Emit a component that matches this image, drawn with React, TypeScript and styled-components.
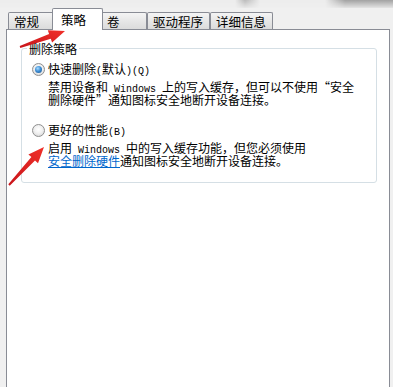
import styled, { createGlobalStyle } from "styled-components";

const GlobalStyle = createGlobalStyle`
  html, body {
    margin: 0;
    padding: 0;
    background: #f0f0f0;
  }
  body {
    font-family: "Noto Sans CJK SC", "Noto Sans", sans-serif;
    font-size: 12px;
    color: #000;
  }
`;

const Window = styled.div`
  position: relative;
  width: 393px;
  height: 387px;
  overflow: hidden;
  background: #f0f0f0;
  display: flex;
  flex-direction: column;
`;

const TopEdge = styled.div`
  height: 8px;
  flex: none;
  background:
    linear-gradient(to right, transparent 0, transparent 235px, rgba(90, 90, 90, 0.35) 245px, transparent 260px, transparent 325px, rgba(70, 70, 70, 0.45) 345px, rgba(70, 70, 70, 0.45) 393px),
    #ececec;
  -webkit-mask-image: linear-gradient(to bottom, #000, rgba(0, 0, 0, 0.15));
`;

const TabStrip = styled.div`
  display: flex;
  align-items: flex-end;
  height: 22px;
  padding-left: 8px;
  flex: none;
`;

const Tab = styled.div<{ $active?: boolean }>`
  position: relative;
  z-index: ${p => (p.$active ? 3 : 0)};
  box-sizing: border-box;
  min-width: ${p => (p.$active ? 51 : 46)}px;
  height: ${p => (p.$active ? 22 : 18)}px;
  margin: 0 ${p => (p.$active ? -2 : 0)}px;
  padding: ${p => (p.$active ? "3px 8px 0 8px" : "1px 6px 0 5px")};
  border: 1px solid #898c95;
  border-bottom: none;
  border-radius: 2px 2px 0 0;
  background: ${p => (p.$active ? "#ffffff" : "linear-gradient(to bottom, #f4f4f4 0%, #e6e6e6 50%, #dadada 100%)")};
  font-size: 12.5px;
  line-height: 15px;
  white-space: nowrap;
  & + & {
    border-left: ${p => (p.$active ? "1px solid #898c95" : "none")};
  }
`;

const Panel = styled.div`
  position: relative;
  z-index: 1;
  flex: 1;
  margin: -1px 3px 0 6px;
  border: 1px solid #898c95;
  border-bottom: none;
  background: #ffffff;
  padding: 12px 12px 0 14px;
`;

const Group = styled.fieldset`
  margin: 0;
  padding: 0;
  border: 1px solid #d5dfe5;
  border-radius: 3px;
  min-width: 0;
`;

const GroupTitle = styled.legend`
  margin-left: 5px;
  padding: 0 2px;
  line-height: 13px;
  font-size: 12px;
`;

const GroupBody = styled.div`
  padding: 8px 10px 15px 10px;
`;

const OptionRow = styled.div<{ $gap?: number }>`
  display: flex;
  align-items: center;
  gap: 3px;
  height: 13px;
  margin-top: ${p => p.$gap ?? 0}px;
  line-height: 13px;
  white-space: nowrap;
`;

const Radio = styled.span<{ $checked?: boolean }>`
  position: relative;
  flex: none;
  box-sizing: border-box;
  width: 13px;
  height: 13px;
  border-radius: 50%;
  border: 1px solid #8f8f8f;
  background: radial-gradient(circle at 50% 40%, #ffffff 0%, #f1f1f1 45%, #cfcfcf 100%);
  &::after {
    content: "";
    display: ${p => (p.$checked ? "block" : "none")};
    position: absolute;
    left: 2px;
    top: 2px;
    width: 7px;
    height: 7px;
    border-radius: 50%;
    background: radial-gradient(circle at 40% 35%, #a9dcff 0%, #3f8fd6 45%, #174f86 100%);
  }
`;

const Desc = styled.div<{ $gap?: number }>`
  margin-top: ${p => p.$gap ?? 0}px;
  padding-left: 16px;
`;

const Line = styled.div`
  display: flex;
  align-items: baseline;
  height: 13px;
  line-height: 13px;
  white-space: nowrap;
`;

const Half = styled.span`
  font-family: "Liberation Mono", "DejaVu Sans Mono", monospace;
  font-size: 10px;
  white-space: pre;
`;

const HelpLink = styled.a`
  color: #0066cc;
  text-decoration: underline;
  cursor: pointer;
`;

const Marks = styled.svg`
  position: absolute;
  left: 0;
  top: 0;
  z-index: 5;
  pointer-events: none;
`;

const tabs = ["常规", "策略", "卷", "驱动程序", "详细信息"];

export default function App() {
  return (
    <>
      <GlobalStyle />
      <Window>
        <TopEdge />
        <TabStrip>
          {tabs.map(t => (
            <Tab key={t} $active={t === "策略"}>{t}</Tab>
          ))}
        </TabStrip>
        <Panel>
          <Group>
            <GroupTitle>删除策略</GroupTitle>
            <GroupBody>
              <OptionRow>
                <Radio $checked />
                <span>快速删除<Half>(</Half>默认<Half>)(Q)</Half></span>
              </OptionRow>
              <Desc $gap={4}>
                <Line>禁用设备和<Half> Windows </Half>上的写入缓存，但可以不使用“安全</Line>
                <Line>删除硬件”通知图标安全地断开设备连接。</Line>
              </Desc>
              <OptionRow $gap={18}>
                <Radio />
                <span>更好的性能<Half>(B)</Half></span>
              </OptionRow>
              <Desc $gap={4}>
                <Line>启用<Half> Windows </Half>中的写入缓存功能，但您必须使用</Line>
                <Line><HelpLink>安全删除硬件</HelpLink>通知图标安全地断开设备连接。</Line>
              </Desc>
            </GroupBody>
          </Group>
        </Panel>
        <Marks width="393" height="387" viewBox="0 0 393 387">
          <defs>
            <linearGradient id="redArrow" x1="0" y1="1" x2="1" y2="0">
              <stop offset="0" stopColor="#c8141a" />
              <stop offset="1" stopColor="#f0312a" />
            </linearGradient>
          </defs>
          <polygon
            fill="url(#redArrow)"
            points="19.7,46.1 49.1,34.0 47.8,30.2 65,31 52.1,42.5 50.8,38.7 20.3,47.9"
          />
          <polygon
            fill="url(#redArrow)"
            points="8.3,184.3 31.4,157.1 28.4,154.4 44,147 38.0,163.2 35.0,160.5 9.7,185.7"
          />
        </Marks>
      </Window>
    </>
  );
}
